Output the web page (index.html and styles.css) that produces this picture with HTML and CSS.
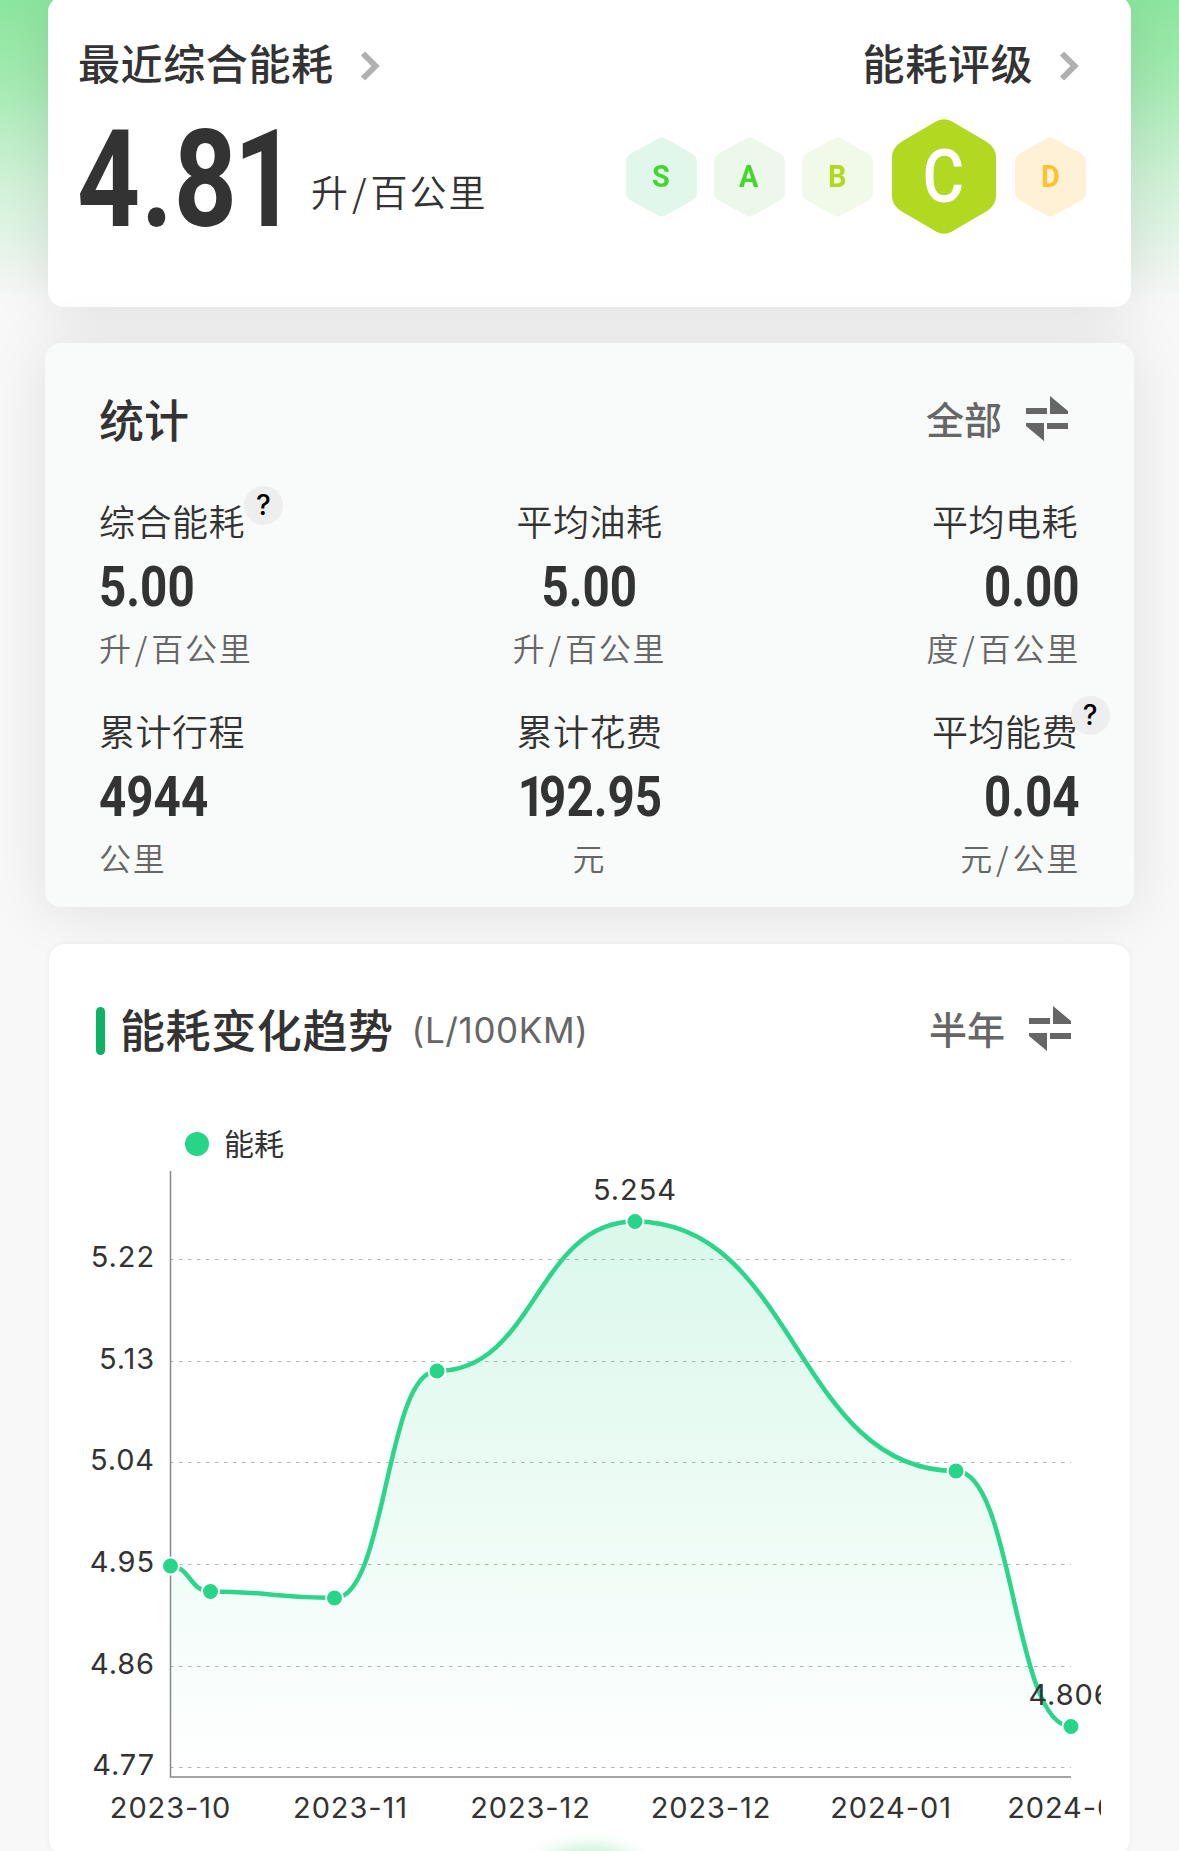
FILE: index.html
```html
<!DOCTYPE html>
<html lang="zh-CN">
<head>
    <meta charset="UTF-8">
    <meta name="viewport" content="width=device-width, initial-scale=1.0">
    <title>能耗</title>
    <link rel="stylesheet" href="styles.css">
</head>
<body>

    <div class="page">

        <!-- Latest consumption + rating -->
        <div class="card summary">
            <div class="recent">
                <div class="heading">
                    <span>最近综合能耗</span>
                    <svg class="chevron" viewBox="0 0 20 30"><path d="M3 2.5 L15.5 15 L3 27.5"/></svg>
                </div>
                <div class="reading">
                    <span class="big-number">4.8<span class="one">1</span></span>
                    <span class="big-unit">升<span class="slash">/</span>百公里</span>
                </div>
            </div>
            <div class="rating">
                <div class="heading">
                    <span>能耗评级</span>
                    <svg class="chevron" viewBox="0 0 20 30"><path d="M3 2.5 L15.5 15 L3 27.5"/></svg>
                </div>
                <div class="grades">
                    <div class="grade grade-s">
                        <svg viewBox="0 0 71 80"><path d="M31 2 Q35.5 -1 40 2 L66 16.500 Q71 19.500 71 25 L71 55 Q71 60.500 66 63.500 L40 78 Q35.500 81 31 78 L5 63.500 Q0 60.500 0 55 L0 25 Q0 19.500 5 16.500 Z"/></svg>
                        <span>S</span>
                    </div>
                    <div class="grade grade-a">
                        <svg viewBox="0 0 71 80"><path d="M31 2 Q35.5 -1 40 2 L66 16.500 Q71 19.500 71 25 L71 55 Q71 60.500 66 63.500 L40 78 Q35.500 81 31 78 L5 63.500 Q0 60.500 0 55 L0 25 Q0 19.500 5 16.500 Z"/></svg>
                        <span>A</span>
                    </div>
                    <div class="grade grade-b">
                        <svg viewBox="0 0 71 80"><path d="M31 2 Q35.5 -1 40 2 L66 16.500 Q71 19.500 71 25 L71 55 Q71 60.500 66 63.500 L40 78 Q35.500 81 31 78 L5 63.500 Q0 60.500 0 55 L0 25 Q0 19.500 5 16.500 Z"/></svg>
                        <span>B</span>
                    </div>
                    <div class="grade grade-c active">
                        <svg viewBox="0 0 104 115"><path d="M44 2.500 Q52 -2 60 2.500 L95 23 Q104 29 104 38 L104 77 Q104 86 95 92 L60 112.500 Q52 117 44 112.500 L9 92 Q0 86 0 77 L0 38 Q0 29 9 23 Z"/></svg>
                        <span>C</span>
                    </div>
                    <div class="grade grade-d">
                        <svg viewBox="0 0 71 80"><path d="M31 2 Q35.5 -1 40 2 L66 16.500 Q71 19.500 71 25 L71 55 Q71 60.500 66 63.500 L40 78 Q35.500 81 31 78 L5 63.500 Q0 60.500 0 55 L0 25 Q0 19.500 5 16.500 Z"/></svg>
                        <span>D</span>
                    </div>
                </div>
            </div>
        </div>

        <!-- Statistics -->
        <div class="card stats">
            <div class="card-head">
                <h2>统计</h2>
                <div class="switch">
                    <span>全部</span>
                    <svg viewBox="0 0 42 45"><path d="M0 12h21v6H0z M24 0L42 15v3H24z M0 27h18v18L0 30z M21 27h21v6H21z"/></svg>
                </div>
            </div>
            <div class="stat-grid">
                <div class="stat">
                    <div class="label">综合能耗<span class="help">?</span></div>
                    <div class="number">5.00</div>
                    <div class="unit">升<span class="slash">/</span>百公里</div>
                </div>
                <div class="stat center">
                    <div class="label">平均油耗</div>
                    <div class="number">5.00</div>
                    <div class="unit">升<span class="slash">/</span>百公里</div>
                </div>
                <div class="stat right">
                    <div class="label">平均电耗</div>
                    <div class="number">0.00</div>
                    <div class="unit">度<span class="slash">/</span>百公里</div>
                </div>
                <div class="stat">
                    <div class="label">累计行程</div>
                    <div class="number">4944</div>
                    <div class="unit">公里</div>
                </div>
                <div class="stat center">
                    <div class="label">累计花费</div>
                    <div class="number"><span class="lead-one">1</span>92.95</div>
                    <div class="unit">元</div>
                </div>
                <div class="stat right">
                    <div class="label">平均能费<span class="help">?</span></div>
                    <div class="number">0.04</div>
                    <div class="unit">元<span class="slash">/</span>公里</div>
                </div>
            </div>
        </div>

        <!-- Trend chart -->
        <div class="card trend">
            <div class="card-head">
                <h2>能耗变化趋势</h2>
                <span class="scale">(L/100KM)</span>
                <div class="switch">
                    <span>半年</span>
                    <svg viewBox="0 0 42 45"><path d="M0 12h21v6H0z M24 0L42 15v3H24z M0 27h18v18L0 30z M21 27h21v6H21z"/></svg>
                </div>
            </div>
            <svg class="chart" viewBox="79 1110 1022 730">
                <defs>
                    <linearGradient id="fill" gradientUnits="userSpaceOnUse" x1="0" y1="1221" x2="0" y2="1777">
                        <stop offset="0" stop-color="#26d587" stop-opacity="0.17"/>
                        <stop offset="1" stop-color="#26d587" stop-opacity="0"/>
                    </linearGradient>
                </defs>

                <circle class="dot" cx="197" cy="1144" r="12"/>
                <text class="legend" x="224" y="1155">能耗</text>

                <g class="grid">
                    <path d="M170 1259.500H1071"/>
                    <path d="M170 1361.500H1071"/>
                    <path d="M170 1462.500H1071"/>
                    <path d="M170 1564.500H1071"/>
                    <path d="M170 1666.500H1071"/>
                    <path d="M170 1767.500H1071"/>
                </g>
                <path class="axis" d="M170.500 1171V1777H1071"/>

                <path class="area" d="M170 1566 C190 1566 190 1591.500 210 1591.500 C272.500 1591.500 272.500 1598 335 1598 C386 1598 386 1371 437 1371 C536 1371 536 1221.500 635 1221.500 C795.500 1221.500 795.500 1471 956 1471 C1013.500 1471 1013.500 1726.500 1071 1726.500 V1777 H170 Z"/>
                <path class="line" d="M170 1566 C190 1566 190 1591.500 210 1591.500 C272.500 1591.500 272.500 1598 335 1598 C386 1598 386 1371 437 1371 C536 1371 536 1221.500 635 1221.500 C795.500 1221.500 795.500 1471 956 1471 C1013.500 1471 1013.500 1726.500 1071 1726.500"/>

                <g class="points">
                    <circle cx="170.500" cy="1566" r="8.500"/>
                    <circle cx="210.500" cy="1591.500" r="8.500"/>
                    <circle cx="334.500" cy="1598" r="8.500"/>
                    <circle cx="437" cy="1371" r="8.500"/>
                    <circle cx="635" cy="1221.500" r="8.500"/>
                    <circle cx="956" cy="1471" r="8.500"/>
                    <circle cx="1071" cy="1726.500" r="8.500"/>
                </g>

                <g class="y-labels">
                    <text x="155" y="1267">5.22</text>
                    <text x="155" y="1369">5.13</text>
                    <text x="155" y="1470">5.04</text>
                    <text x="155" y="1572">4.95</text>
                    <text x="155" y="1674">4.86</text>
                    <text x="155" y="1775">4.77</text>
                </g>
                <g class="x-labels">
                    <text x="170.500" y="1818">2023-10</text>
                    <text x="350.500" y="1818">2023-11</text>
                    <text x="530.500" y="1818">2023-12</text>
                    <text x="711" y="1818">2023-12</text>
                    <text x="891" y="1818">2024-01</text>
                    <text x="1071" y="1818">2024-02</text>
                    <text x="635" y="1200">5.254</text>
                    <text x="1070.500" y="1705">4.806</text>
                </g>
            </svg>
        </div>

        <div class="glow"></div>
    </div>

</body>
</html>
```
FILE: styles.css
```css
* {
    box-sizing: border-box;
}

body {
    margin: 0;
    font-family: "Noto Sans CJK SC", sans-serif;
    background-color: #f8f8f8;
    color: #333;
}

.page {
    position: relative;
    height: 1851px;
    overflow: hidden;
    background: linear-gradient(180deg, #8ce69e 0, #a4ebb2 80px, #d0f2d7 180px, #f8f8f8 300px);
}

.card {
    border-radius: 16px;
    background-color: #fff;
}

/* Summary card */
.summary {
    display: flex;
    justify-content: space-between;
    height: 311px;
    margin: -4px 48px 0;
    padding: 33px 45px 0 30px;
    box-shadow: 0 4px 60px rgba(0, 0, 0, 0.1);
}

.heading {
    display: flex;
    align-items: center;
    height: 64px;
    font-size: 42px;
    font-weight: 500;
    letter-spacing: 0.6px;
}

.chevron {
    width: 20px;
    height: 30px;
    margin: 9px 0 0 26px;
    fill: none;
    stroke: #b0b0b0;
    stroke-width: 6;
}

.reading {
    display: flex;
    align-items: flex-start;
}

.big-number {
    width: 204px;
    margin: 38px 0 0 -1px;
    font-family: Roboto, sans-serif;
    font-size: 136px;
    font-weight: 700;
    line-height: 97px;
    letter-spacing: 1px;
    white-space: nowrap;
    transform: scaleX(0.81);
    transform-origin: 0 0;
}

.one {
    margin-left: -5px;
}

.big-unit {
    margin: 73px 0 0 30px;
    font-size: 37px;
    font-weight: 350;
    line-height: 50px;
    letter-spacing: 2px;
}

.slash {
    padding: 0 2px;
}

.rating {
    display: flex;
    flex-direction: column;
}

.rating .heading {
    align-self: flex-end;
    margin-right: 7px;
}

.grades {
    display: flex;
    align-items: center;
    gap: 17px;
    height: 115px;
    margin-top: 26px;
}

.grade {
    display: grid;
    width: 71px;
    height: 80px;
    font-family: Roboto, sans-serif;
    font-size: 32px;
    font-weight: 700;
}

.grade svg,
.grade span {
    grid-area: 1 / 1;
}

.grade span {
    place-self: center;
    margin: 0 1px 2px 0;
    line-height: 1;
    transform: scaleX(0.9);
}

.grade-s {
    color: #44d62c;
    fill: #e2f7ec;
}

.grade-a {
    color: #44d62c;
    fill: #ebf8ea;
}

.grade-b {
    color: #b2d922;
    fill: #f1f9e8;
}

.grade-d {
    color: #ffc12e;
    fill: #fff1d6;
}

.grade.active {
    width: 104px;
    height: 115px;
    margin: 0 2px;
    color: #fff;
    fill: #b2d922;
    font-size: 74px;
    font-weight: 500;
}

.grade.active span {
    margin-bottom: 0;
    transform: scaleX(0.86);
}

/* Statistics card */
.stats {
    height: 564px;
    margin: 36px 45px 0;
    padding: 43px 54px 0;
    background-color: #f9fafa;
    box-shadow: 0 4px 60px rgba(0, 0, 0, 0.1);
}

.card-head {
    display: flex;
    align-items: center;
}

h2 {
    margin: 0;
    font-size: 45px;
    font-weight: 500;
    line-height: 66px;
}

.switch {
    display: flex;
    align-items: center;
    gap: 24px;
    margin: -2px 0 0 auto;
    color: #666;
    font-size: 38px;
    font-weight: 500;
    line-height: 60px;
}

.switch svg {
    width: 42px;
    height: 45px;
    fill: #666;
}

.stats .switch {
    padding-right: 12px;
}

.stat-grid {
    display: grid;
    grid-template-columns: repeat(3, 1fr);
    margin-top: 43px;
}

.stat {
    display: flex;
    flex-direction: column;
    align-items: flex-start;
    height: 210px;
}

.stat.center {
    align-items: center;
}

.stat.right {
    align-items: flex-end;
}

.label {
    position: relative;
    font-size: 36px;
    font-weight: 350;
    line-height: 50px;
    letter-spacing: 0.5px;
}

.right .label {
    margin-right: 2px;
}

.help {
    position: absolute;
    top: -9px;
    right: -38px;
    width: 39px;
    height: 39px;
    border-radius: 50%;
    background-color: #eee;
    color: #000;
    font-family: Inter, sans-serif;
    font-size: 28px;
    font-weight: 500;
    line-height: 39px;
    text-align: center;
}

.right .help {
    right: -32px;
}

.number {
    margin-top: 22px;
    font-family: Roboto, sans-serif;
    font-size: 56px;
    font-weight: 700;
    line-height: 40px;
    transform: scaleX(0.85);
    transform-origin: 0 0;
}

.center .number {
    transform-origin: 50% 0;
}

.right .number {
    transform-origin: 100% 0;
}

.lead-one {
    margin-right: -7px;
}

.unit {
    margin-top: 16px;
    color: #666;
    font-size: 32px;
    font-weight: 350;
    line-height: 48px;
    letter-spacing: 1.8px;
}

/* Trend card */
.trend {
    height: 911px;
    margin: 37px 49px 0;
    padding: 52px 59px 0 47px;
    box-shadow: 0 0 6px rgba(0, 0, 0, 0.06);
}

.trend h2 {
    letter-spacing: 0.6px;
}

.trend h2::before {
    content: "";
    display: inline-block;
    width: 9px;
    height: 48px;
    margin-right: 15px;
    border-radius: 5px;
    background-color: #0fb264;
    vertical-align: -7px;
}

.scale {
    margin: 2px 0 0 18px;
    color: #666;
    font-family: Inter, sans-serif;
    font-size: 35px;
    font-weight: 400;
    letter-spacing: 0.6px;
}

.chart {
    display: block;
    width: 1022px;
    height: 730px;
    margin: 48px 0 0 -17px;
}

.dot {
    fill: #26d587;
}

.legend {
    font-size: 30px;
    fill: #333;
}

.grid path {
    stroke: #b4b4b4;
    stroke-dasharray: 3.500 5.500;
}

.axis {
    fill: none;
    stroke: #888;
    stroke-width: 1.500;
}

.area {
    fill: url(#fill);
}

.line {
    fill: none;
    stroke: #2bd58a;
    stroke-width: 4.500;
}

.points circle {
    fill: #26d587;
    stroke: #fff;
    stroke-width: 2;
}

.y-labels,
.x-labels {
    font-family: Inter, sans-serif;
    font-size: 29px;
    letter-spacing: 0.9px;
    fill: #333;
}

.y-labels {
    text-anchor: end;
}

.x-labels {
    text-anchor: middle;
}

/* Tab bar glow peeking in at the bottom edge */
.glow {
    position: absolute;
    left: 535px;
    top: 1848px;
    width: 110px;
    height: 60px;
    border-radius: 50%;
    background-color: #b4efc8;
    filter: blur(9px);
}
```
